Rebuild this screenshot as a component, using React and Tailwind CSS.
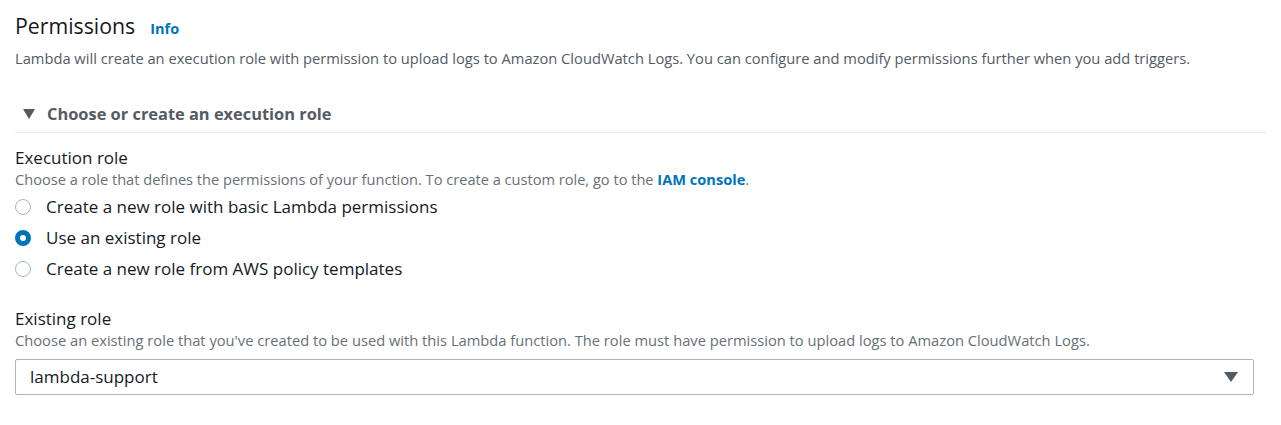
export default function App() {
  const roles = [
    'Create a new role with basic Lambda permissions',
    'Use an existing role',
    'Create a new role from AWS policy templates',
  ];
  const selected = 1;

  return (
    <div className="w-[1281px] h-[425px] bg-white font-['Open_Sans',sans-serif] text-[#16191f]">
      <div className="pl-[15px] pr-[14px] pt-[11px]">
        {/* HEADER */}
        <div className="flex items-baseline">
          <h2 className="text-[21.3px] leading-[30px] font-normal">Permissions</h2>
          <a className="ml-[15px] text-[14.5px] font-bold text-[#0073bb]">Info</a>
        </div>
        <p className="mt-[7px] text-[14.7px] leading-[20px] text-[#545b64]">
          Lambda will create an execution role with permission to upload logs to Amazon CloudWatch Logs. You can configure and modify permissions further when you add triggers.
        </p>

        {/* EXPANDABLE SECTION */}
        <div className="mt-[35px] border-b border-[#eaeded] pb-[7px] flex items-center">
          <svg width="12" height="10" viewBox="0 0 12 10" className="ml-[8px] mr-[12px]">
            <path d="M0 0 H12 L6 10 Z" fill="#545b64" />
          </svg>
          <span className="text-[16.4px] leading-[22px] font-bold text-[#545b64]">Choose or create an execution role</span>
        </div>

        {/* EXECUTION ROLE */}
        <div className="mt-[14px]">
          <div className="text-[17px] leading-[22px]">Execution role</div>
          <div className="text-[14.6px] leading-[20px] text-[#687078]">
            Choose a role that defines the permissions of your function. To create a custom role, go to the{' '}
            <a className="font-bold text-[#0073bb]">IAM console</a>.
          </div>
          <div className="mt-[2px] flex flex-col">
            {roles.map((r, i) => (
              <label key={r} className="flex items-center h-[31px]">
                {i === selected ? (
                  <span className="w-[16px] h-[16px] rounded-full border-[5px] border-[#0073bb] bg-white" />
                ) : (
                  <span className="w-[16px] h-[16px] rounded-full border-[1.5px] border-[#aab7b8] bg-white" />
                )}
                <span className="ml-[15px] text-[17px] leading-[22px]">{r}</span>
              </label>
            ))}
          </div>
        </div>

        {/* EXISTING ROLE */}
        <div className="mt-[24px] pr-[13px]">
          <div className="text-[17px] leading-[22px]">Existing role</div>
          <div className="text-[14.7px] leading-[20px] text-[#687078]">
            Choose an existing role that you've created to be used with this Lambda function. The role must have permission to upload logs to Amazon CloudWatch Logs.
          </div>
          <div className="mt-[9px] h-[36px] border border-[#aab7b8] rounded-[2px] flex items-center justify-between pl-[14px] pr-[15px]">
            <span className="text-[17px]">lambda-support</span>
            <svg width="14" height="10" viewBox="0 0 14 10">
              <path d="M0 0 H14 L7 10 Z" fill="#545b64" />
            </svg>
          </div>
        </div>
      </div>
    </div>
  );
}
